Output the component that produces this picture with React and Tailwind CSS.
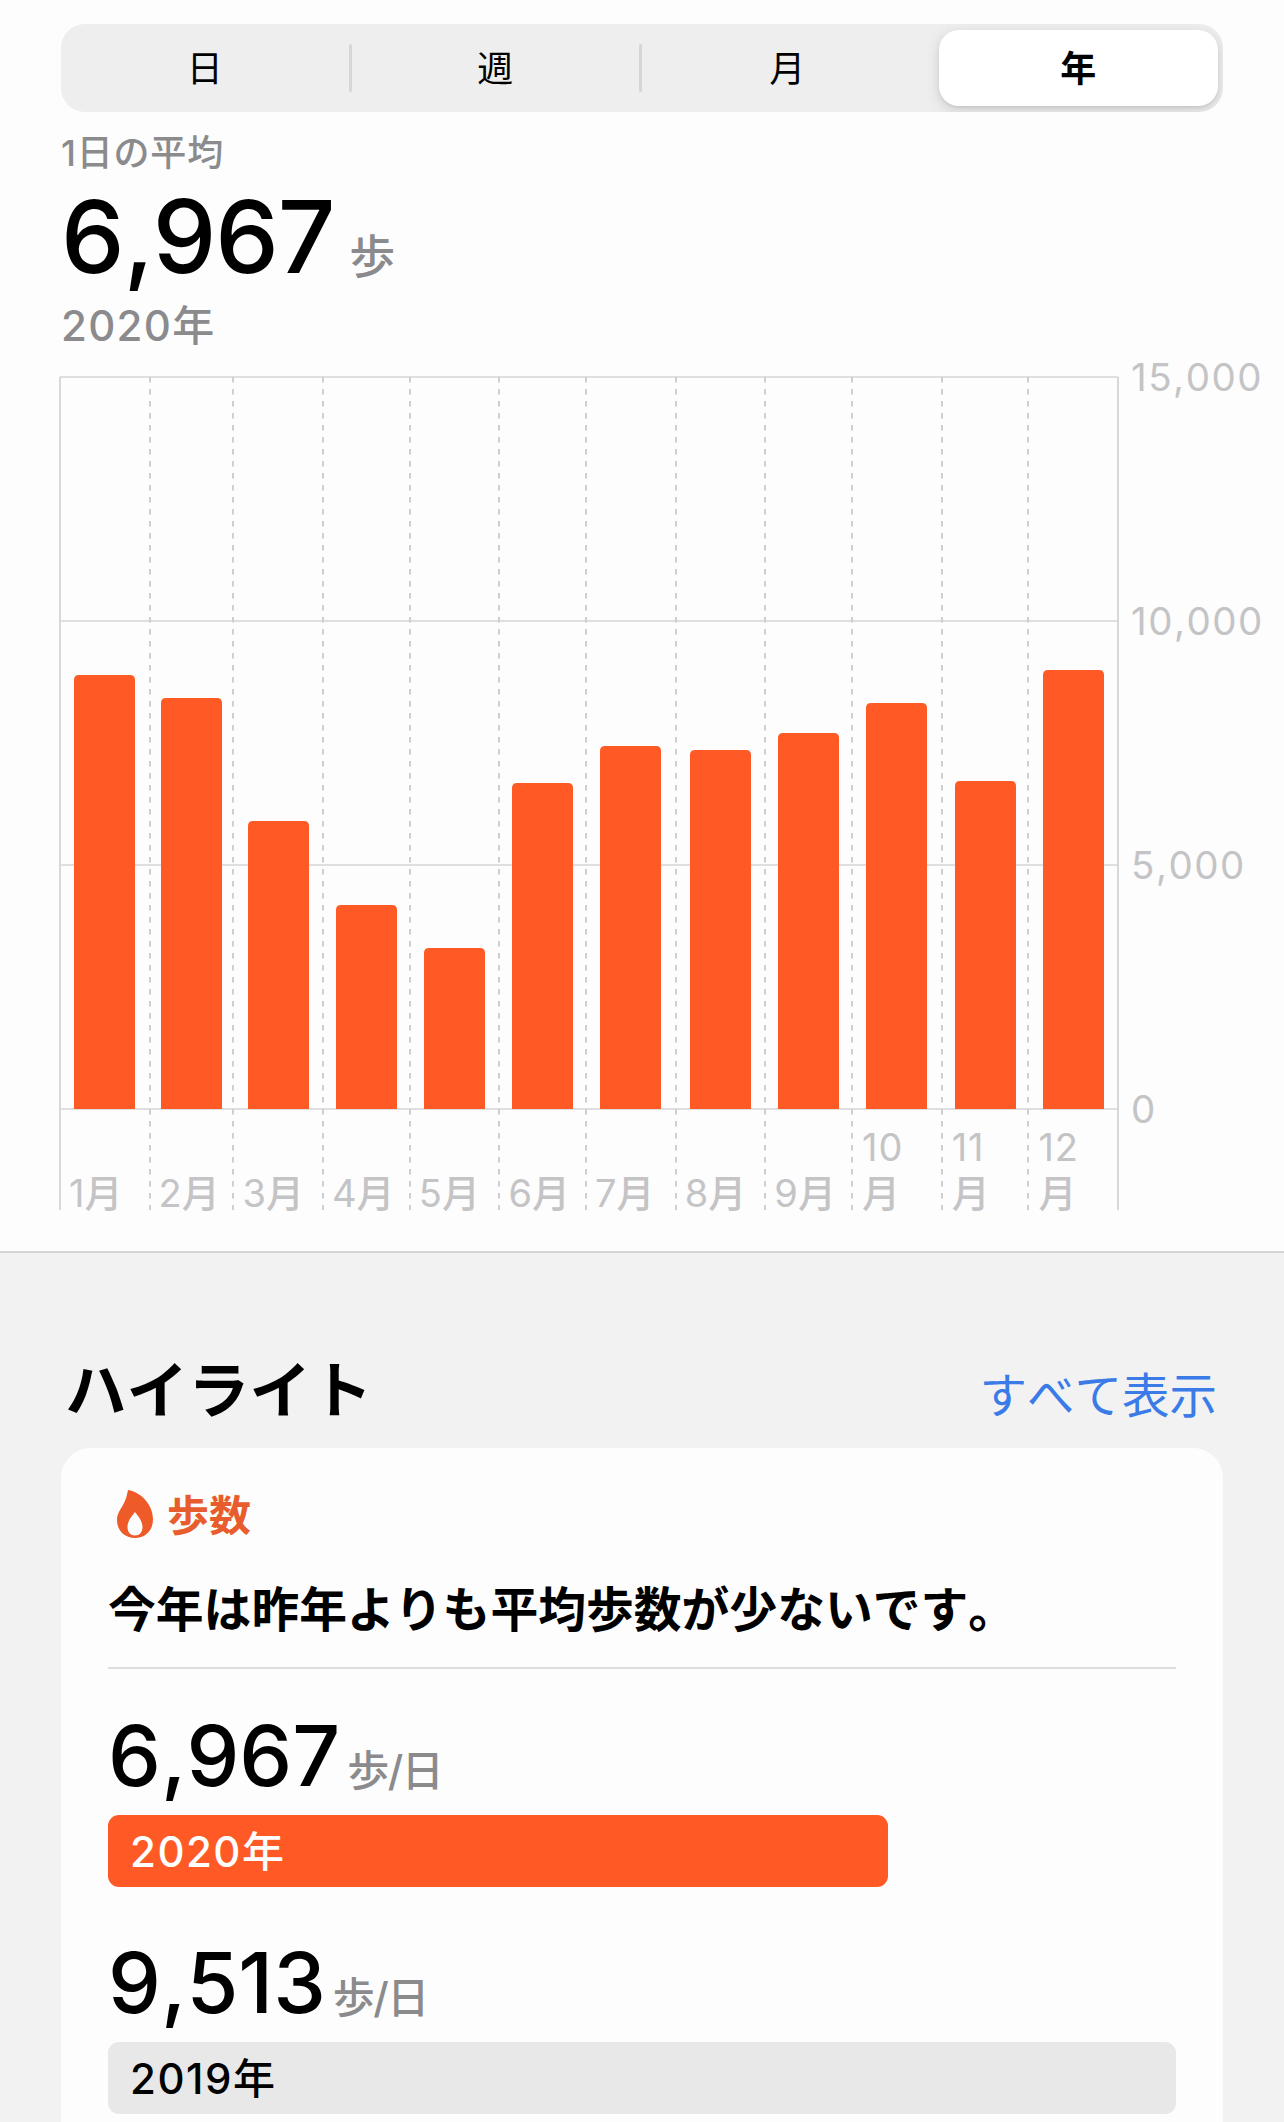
const TABS = ['日', '週', '月', '年'];

// days per month decide the column widths
const MONTHS = [
  { label: '1', days: 31, steps: 8893 },
  { label: '2', days: 29, steps: 8422 },
  { label: '3', days: 31, steps: 5902 },
  { label: '4', days: 30, steps: 4180 },
  { label: '5', days: 31, steps: 3299 },
  { label: '6', days: 30, steps: 6680 },
  { label: '7', days: 31, steps: 7439 },
  { label: '8', days: 31, steps: 7357 },
  { label: '9', days: 30, steps: 7705 },
  { label: '10', days: 31, steps: 8320 },
  { label: '11', days: 30, steps: 6721 },
  { label: '12', days: 31, steps: 8996 },
];

const LEFT = 60;
const RIGHT = 1118;
const TOP = 1;
const BASE = 733;
const BOTTOM = 834;
const MAX = 15000;
const BAR_WIDTH = 61;

const yFor = (steps) => Math.round(BASE - (steps / MAX) * (BASE - TOP));

function SegmentedControl() {
  return (
    <div className="mx-[61px] grid h-[88px] grid-cols-4 overflow-hidden rounded-[24px] bg-[#eeeeee] text-[36px]">
      {TABS.map((tab, i) =>
        tab === '年' ? (
          <div key={tab} className="flex py-1.5 pr-[5px] pl-[6px]">
            <div className="flex flex-1 items-center justify-center rounded-[20px] bg-white pt-0.5 font-bold shadow-[0_4px_14px_rgba(0,0,0,0.14),0_2px_3px_rgba(0,0,0,0.06)]">
              {tab}
            </div>
          </div>
        ) : (
          <div key={tab} className="flex items-center">
            <span className="flex-1 pt-0.5 text-center">{tab}</span>
            {i < 2 && <span className="h-12 w-[3px] rounded-full bg-[#d6d6d6]" />}
          </div>
        )
      )}
    </div>
  );
}

function StepsChart() {
  const scale = (RIGHT - LEFT) / 366;
  let x = LEFT;
  const columns = MONTHS.map((m) => {
    const col = { ...m, x, width: m.days * scale };
    x += col.width;
    return col;
  });

  return (
    <svg
      className="mt-[26px] block overflow-visible"
      width="1284"
      height="834"
      viewBox="0 0 1284 834"
      fill="none"
    >
      {/* Horizontal grid */}
      {[15000, 10000, 5000, 0].map((v) => (
        <g key={v}>
          <line x1={LEFT} x2={RIGHT} y1={yFor(v)} y2={yFor(v)} stroke="#dfdfe1" strokeWidth="2" />
          <text x="1131" y={yFor(v) + 14} fill="#c4c4c6" fontSize="38.500" letterSpacing="1.500">
            {v.toLocaleString('en-US')}
          </text>
        </g>
      ))}

      {/* Month separators */}
      <line x1={LEFT} x2={LEFT} y1={TOP} y2={BOTTOM} stroke="#d8d8da" strokeWidth="2" />
      <line x1={RIGHT} x2={RIGHT} y1={TOP} y2={BOTTOM} stroke="#d8d8da" strokeWidth="2" />
      {columns.slice(1).map((c) => (
        <line
          key={c.label}
          x1={Math.round(c.x)}
          x2={Math.round(c.x)}
          y1={TOP}
          y2={BOTTOM}
          stroke="#cfcfd1"
          strokeWidth="2"
          strokeDasharray="5.5 6.5"
        />
      ))}

      {/* Bars */}
      {columns.map((c) => {
        const left = Math.round(c.x + (c.width - BAR_WIDTH) / 2);
        const right = left + BAR_WIDTH;
        const top = yFor(c.steps);
        return (
          <path
            key={c.label}
            d={`M${left} ${BASE}V${top + 5}q0-5 5-5H${right - 5}q5 0 5 5V${BASE}z`}
            fill="#ff5a26"
          />
        );
      })}

      {/* Month labels, two-digit months wrap */}
      {columns.map((c) => (
        <text key={c.label} y="831" fill="#c4c4c6" fontSize="38">
          {c.label.length > 1 ? (
            <>
              <tspan x={c.x + 10} y="785" letterSpacing="1">{c.label}</tspan>
              <tspan x={c.x + 10} y="831" fontWeight="500">月</tspan>
            </>
          ) : (
            <>
              <tspan x={c.x + 9}>{c.label}</tspan>
              <tspan fontWeight="500">月</tspan>
            </>
          )}
        </text>
      ))}
    </svg>
  );
}

function FlameIcon() {
  return (
    <svg className="ml-[9px] h-12 w-9" viewBox="0 0 36 48" fill="#ee5a28">
      <path
        fillRule="evenodd"
        d="M11 0C24 2 36 15 36 29C36 41 28 48 18 48C8 48 0 41 0 30C0 23 4 19 7 13C9 9 10 5 11 0ZM18 22C15 26 10.500 31 10.500 37C10.500 42 13.500 45.500 18 45.500C22.500 45.500 25.500 42 25.500 37C25.500 31 21 26 18 22Z"
      />
    </svg>
  );
}

function YearRow({ value, year, width, className, barClass }) {
  return (
    <div className={className}>
      <div className="flex h-[84px] items-baseline leading-[86px]">
        <span className="text-[84px] font-medium">{value}</span>
        <span className="ml-[7px] text-[42px] font-medium tracking-[-1.500px] text-[#8b8b8d]">歩/日</span>
      </div>
      <div
        className={`mt-[18px] flex h-[72px] items-center rounded-[11px] pl-[22px] text-[42px] font-medium tracking-[1.500px] ${barClass}`}
        style={{ width }}
      >
        {year}
      </div>
    </div>
  );
}

export default function App() {
  return (
    <div
      lang="ja"
      className="h-[2122px] w-[1284px] overflow-hidden bg-[#f2f2f2] font-['Inter','Noto_Sans_CJK_JP',sans-serif] text-black [font-kerning:none]"
    >
      <section className="h-[1253px] border-b-2 border-[#d4d4d4] bg-[#fdfdfd] pt-6">
        <SegmentedControl />
        <div className="ml-[61px]">
          <p className="mt-[17px] text-[36px] leading-[48px] font-medium tracking-[0.800px] text-[#8b8b8d]">
            1日の平均
          </p>
          <div className="mt-[7px] flex h-[104px] items-baseline leading-[105px]">
            <span className="text-[101px] font-medium tracking-[-1.200px]">6,967</span>
            <span className="ml-[15px] text-[46px] font-medium text-[#8b8b8d]">歩</span>
          </div>
          <p className="mt-3.5 text-[42px] leading-[48px] font-medium tracking-[1.300px] text-[#8b8b8d]">2020年</p>
        </div>
        <StepsChart />
      </section>

      <section className="px-[61px] pt-[102px]">
        <div className="flex h-[72px] items-baseline justify-between pr-1.5 pl-1 leading-[72px]">
          <h2 className="text-[61.500px] font-bold">ハイライト</h2>
          <a className="text-[47.500px] text-[#3a7be8]">すべて表示</a>
        </div>

        <div className="mt-[21px] h-[720px] rounded-t-[30px] bg-[#fdfdfd] px-[47px] pt-[42px]">
          <div className="flex h-12 items-center gap-[14px] text-[42px] font-bold text-[#e85d2e]">
            <FlameIcon />
            <span className="pt-0.5">歩数</span>
          </div>
          <p className="mt-[42px] text-[47.800px] leading-[60px] font-bold">今年は昨年よりも平均歩数が少ないです。</p>
          <div className="mt-[27px] h-0.5 bg-[#dedede]" />
          <YearRow
            className="mt-11"
            value="6,967"
            year="2020年"
            width={780}
            barClass="bg-[#ff5a26] text-white"
          />
          <YearRow
            className="mt-[53px]"
            value="9,513"
            year="2019年"
            width={1068}
            barClass="bg-[#e8e8e8] text-black"
          />
        </div>
      </section>
    </div>
  );
}
